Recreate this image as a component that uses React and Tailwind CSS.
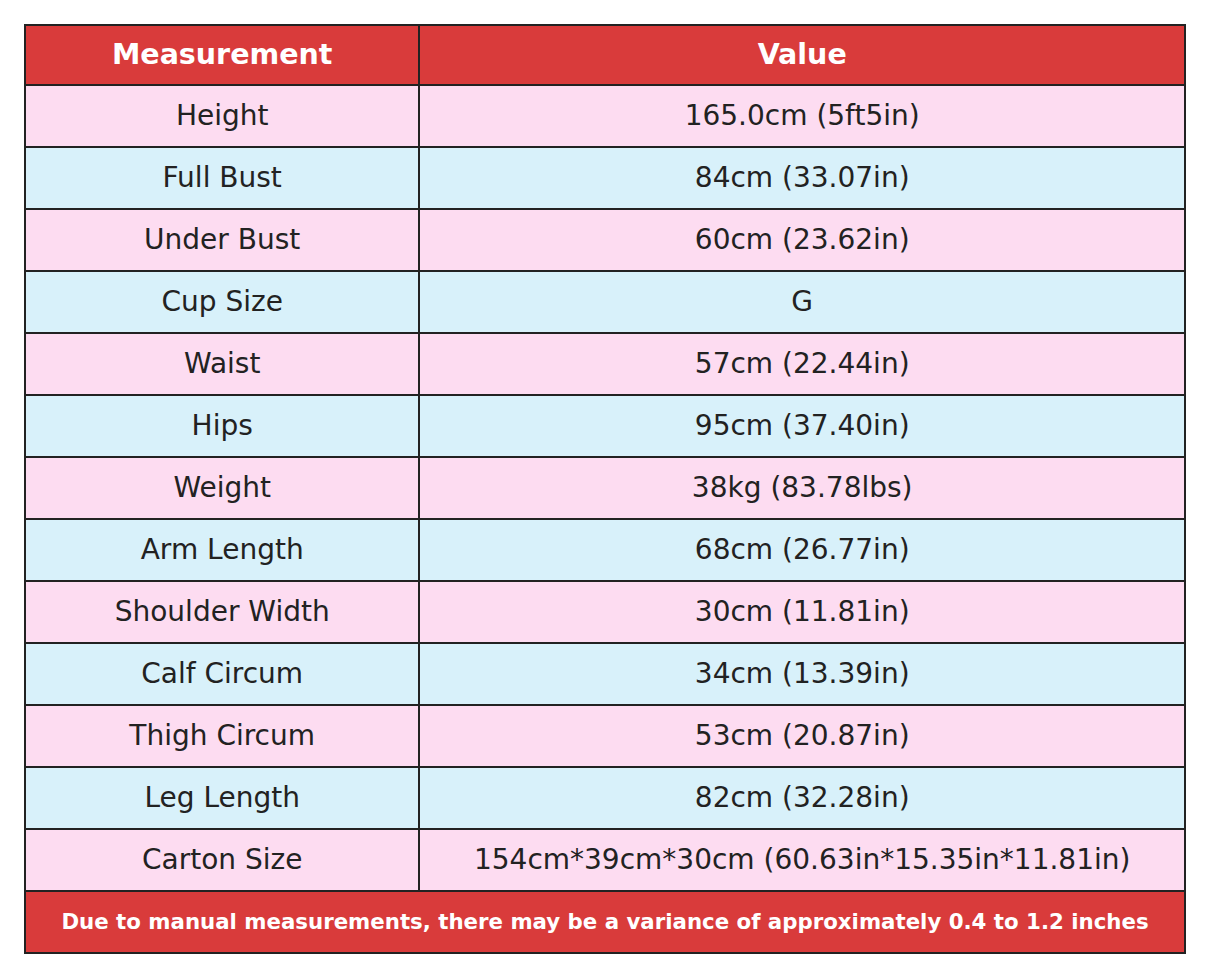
import React from 'react';

const rows = [
  ['Height', '165.0cm (5ft5in)'],
  ['Full Bust', '84cm (33.07in)'],
  ['Under Bust', '60cm (23.62in)'],
  ['Cup Size', 'G'],
  ['Waist', '57cm (22.44in)'],
  ['Hips', '95cm (37.40in)'],
  ['Weight', '38kg (83.78lbs)'],
  ['Arm Length', '68cm (26.77in)'],
  ['Shoulder Width', '30cm (11.81in)'],
  ['Calf Circum', '34cm (13.39in)'],
  ['Thigh Circum', '53cm (20.87in)'],
  ['Leg Length', '82cm (32.28in)'],
  ['Carton Size', '154cm*39cm*30cm (60.63in*15.35in*11.81in)'],
];

export default function App() {
  return (
    <div className="bg-white min-h-screen p-6 font-['DejaVu_Sans',sans-serif] text-[#222222]">
      <table className="w-full border-collapse border-2 border-[#222222] text-center">
        <thead>
          <tr className="bg-[#d93b3b] text-white">
            <th className="h-[60px] w-[34%] border-2 border-[#222222] text-[28.5px] font-bold">Measurement</th>
            <th className="h-[60px] border-2 border-[#222222] text-[28.5px] font-bold">Value</th>
          </tr>
        </thead>
        <tbody>
          {rows.map(([label, value], i) => (
            <tr key={label} className={i % 2 === 0 ? 'bg-[#fddcf1]' : 'bg-[#d8f1fa]'}>
              <td className="h-[62px] border-2 border-[#222222] text-[28px]">{label}</td>
              <td className="h-[62px] border-2 border-[#222222] text-[28px]">{value}</td>
            </tr>
          ))}
          <tr className="bg-[#d93b3b] text-white">
            <td colSpan={2} className="h-[62px] border-2 border-[#222222] text-[21.3px] font-bold">
              Due to manual measurements, there may be a variance of approximately 0.4 to 1.2 inches
            </td>
          </tr>
        </tbody>
      </table>
    </div>
  );
}
